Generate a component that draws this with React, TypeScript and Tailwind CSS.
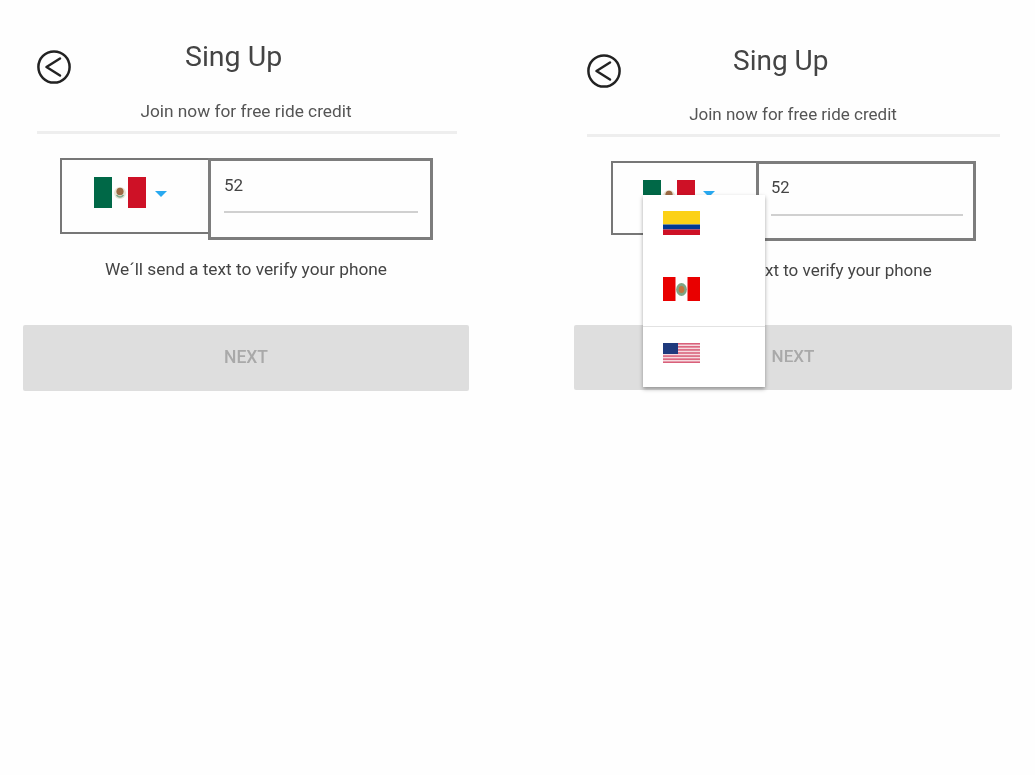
import React from "react";

function BackIcon({ className }: { className: string }) {
  return (
    <svg viewBox="0 0 34 34" className={className} fill="none" stroke="#222" strokeWidth="2.5">
      <circle cx="17" cy="17" r="15.6" />
      <path d="M23 8.5 L9.5 17 L23 25.5" strokeLinecap="round" strokeLinejoin="round" />
    </svg>
  );
}

function Mexico() {
  return (
    <svg viewBox="0 0 52 31" className="w-[52px] h-[31px] block shrink-0">
      <rect width="52" height="31" fill="#fefefe" />
      <rect width="18" height="31" fill="#006847" />
      <rect x="34" width="18" height="31" fill="#ce1126" />
      <circle cx="26" cy="16" r="6" fill="#e9e4d6" />
      <ellipse cx="26" cy="14.5" rx="3.6" ry="3.8" fill="#9c6a44" />
      <path d="M22.5 18 Q26 22 29.5 18" stroke="#7fa88d" strokeWidth="1.6" fill="none" />
    </svg>
  );
}

function Colombia() {
  return (
    <svg viewBox="0 0 37 24" className="w-[37px] h-[24px] block">
      <rect width="37" height="13.5" fill="#fcd116" />
      <rect y="13.5" width="37" height="5" fill="#003893" />
      <rect y="18.5" width="37" height="5.5" fill="#ce1126" />
    </svg>
  );
}

function Peru() {
  return (
    <svg viewBox="0 0 37 24" className="w-[37px] h-[24px] block">
      <rect width="37" height="24" fill="#fefefe" />
      <rect width="12.5" height="24" fill="#e90000" />
      <rect x="24.5" width="12.5" height="24" fill="#e90000" />
      <ellipse cx="18.5" cy="12.5" rx="5.4" ry="6.4" fill="#7fa585" />
      <ellipse cx="18.5" cy="12.5" rx="2.8" ry="3.6" fill="#c0763f" />
    </svg>
  );
}

function Usa() {
  const rows = [0, 1, 2, 3, 4, 5, 6, 7, 8, 9, 10, 11, 12];
  return (
    <svg viewBox="0 0 37 20" className="w-[37px] h-[20px] block">
      <rect width="37" height="20" fill="#f6dbe0" />
      {rows.filter((r) => r % 2 === 0).map((r) => (
        <rect key={r} y={(r * 20) / 13} width="37" height={20 / 13} fill="#d9607a" />
      ))}
      <rect width="15" height="11" fill="#1f3a7d" />
    </svg>
  );
}

function Caret() {
  return (
    <svg viewBox="0 0 12 6" className="w-[12px] h-[6px] block shrink-0">
      <path d="M0 0 H12 L6 6 Z" fill="#29a9f0" />
    </svg>
  );
}

export default function App() {
  return (
    <div className="min-h-[775px] bg-[#fefefe] flex items-start pl-[23px] font-['Roboto',sans-serif] blur-[0.6px]">
      {/* Left panel */}
      <div className="w-[446px] pt-[41px] flex flex-col shrink-0">
        <div className="flex items-start pl-[14px]">
          <BackIcon className="w-[34px] h-[34px] mt-[9px] shrink-0" />
          <h1 className="ml-[114px] text-[28.5px] leading-[32px] text-[#444]">Sing Up</h1>
        </div>
        <p className="mt-[15px] text-center text-[17.3px] leading-[24px] text-[#555]">Join now for free ride credit</p>
        <div className="mt-[8px] ml-[14px] mr-[12px] h-[3px] bg-[#eeeeee]" />
        <div className="mt-[24px] ml-[37px] flex items-start">
          <div className="w-[149px] h-[76px] border-2 border-r-0 border-[#777] pl-[32px] pt-[17px] flex items-start">
            <Mexico />
            <div className="ml-[9px] mt-[14px]"><Caret /></div>
          </div>
          <div className="w-[225px] h-[82px] border-[3px] border-[#7d7d7d] -ml-[1px] pl-[13px] pr-[12px] pt-[12px]">
            <div className="text-[17px] leading-[24px] text-[#444] h-[40px] border-b-2 border-[#d0d0d0]">52</div>
          </div>
        </div>
        <p className="mt-[17px] text-center text-[17.3px] leading-[24px] text-[#444]">We´ll send a text to verify your phone</p>
        <button className="mt-[44px] h-[66px] pb-[2px] rounded-[2px] bg-[#dedede] text-[#a9a9a9] text-[17.5px] font-medium">NEXT</button>
      </div>

      {/* Right panel */}
      <div className="ml-[105px] w-[438px] pt-[45px] flex flex-col shrink-0">
        <div className="flex items-start pl-[13px]">
          <BackIcon className="w-[34px] h-[34px] mt-[9px] shrink-0" />
          <h1 className="ml-[112px] text-[28px] leading-[32px] text-[#444]">Sing Up</h1>
        </div>
        <p className="mt-[14px] text-center text-[17px] leading-[24px] text-[#555]">Join now for free ride credit</p>
        <div className="mt-[8px] ml-[13px] mr-[12px] h-[3px] bg-[#eeeeee]" />
        <div className="relative mt-[24px] ml-[37px] flex items-start">
          <div className="w-[146px] h-[74px] border-2 border-r-0 border-[#777] pl-[30px] pt-[17px] flex items-start">
            <Mexico />
            <div className="ml-[8px] mt-[11px]"><Caret /></div>
          </div>
          <div className="w-[220px] h-[80px] border-[3px] border-[#7d7d7d] -ml-[1px] pl-[12px] pr-[10px] pt-[12px]">
            <div className="text-[16.5px] leading-[24px] text-[#444] h-[40px] border-b-2 border-[#d0d0d0]">52</div>
          </div>
          <div className="absolute left-[32px] top-[34px] w-[122px] h-[192px] bg-white shadow-[0_2px_4px_rgba(0,0,0,0.35)] flex flex-col z-10">
            <div className="h-[66px] pl-[20px] pt-[16px]"><Colombia /></div>
            <div className="h-[66px] pl-[20px] pt-[16px] border-b border-[#e2e2e2]"><Peru /></div>
            <div className="pl-[20px] pt-[16px]"><Usa /></div>
          </div>
        </div>
        <p className="mt-[17px] text-center text-[17px] leading-[24px] text-[#444]">We´ll send a text to verify your phone</p>
        <button className="mt-[43px] h-[65px] pb-[2px] rounded-[2px] bg-[#dedede] text-[#a9a9a9] text-[17px] font-medium">NEXT</button>
      </div>
    </div>
  );
}
